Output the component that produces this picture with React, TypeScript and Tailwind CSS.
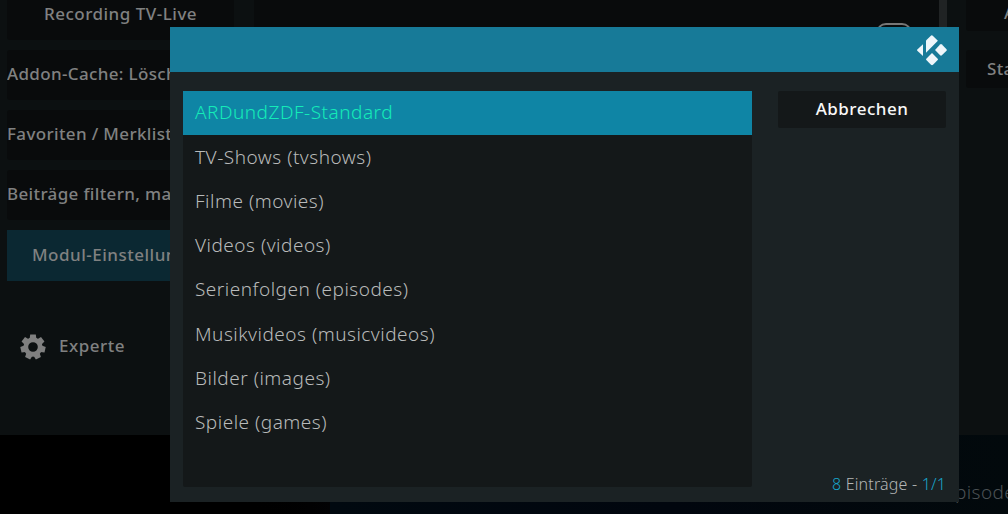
import React from "react";

const entries: string[] = [
  "ARDundZDF-Standard",
  "TV-Shows (tvshows)",
  "Filme (movies)",
  "Videos (videos)",
  "Serienfolgen (episodes)",
  "Musikvideos (musicvideos)",
  "Bilder (images)",
  "Spiele (games)",
];

function KodiLogo() {
  return (
    <svg width="30" height="32" viewBox="0 0 30 32" fill="#eef6fa" className="mr-[12px]">
      <path d="M13.6 1.9Q14.8.7 16 1.9L20.9 6.8 9 18.7V7.1Q9 6.5 9.5 6Z" />
      <path d="M6 10.2V22L.3 16.7Q-.2 16 .3 15.4Z" />
      <path d="M23.1 10.5Q24 9.6 24.9 10.5L29.5 15.2Q30.1 16 29.5 16.8L24.9 21.3Q24 22.1 23.1 21.3L18 16Z" />
      <path d="M15 19.1 20.7 24.7Q21.3 25.4 20.7 26.1L16 30.8Q15 31.6 14 30.8L9.3 26.1Q8.7 25.4 9.3 24.7Z" />
    </svg>
  );
}

function GearIcon() {
  const teeth = [0, 51.43, 102.86, 154.29, 205.71, 257.14, 308.57];
  return (
    <svg width="26" height="26" viewBox="-13.5 -13.5 27 27" fill="none">
      <circle r="7.5" stroke="#808080" strokeWidth="5" />
      {teeth.map((angle) => (
        <path key={angle} d="M-3.5-8.5-2.9-12.9H2.9L3.5-8.5Z" fill="#808080" transform={`rotate(${angle})`} />
      ))}
    </svg>
  );
}

function MenuButton({ label }: { label: string }) {
  return (
    <div className="flex h-[50px] w-[163px] shrink-0 items-center overflow-hidden rounded-l-[3px] bg-[#090b0c] pb-[2px] tracking-[0.35px]">
      <span>{label}</span>
    </div>
  );
}

function Backdrop() {
  return (
    <div className="flex h-full flex-col">
      <div className="flex h-[435px] shrink-0 bg-[#0c1011]">
        <aside className="flex w-[254px] shrink-0 flex-col gap-[10px] pl-[7px] pr-5 text-[17px] font-medium tracking-[0.5px] text-[#808181]">
          <div className="flex h-10 shrink-0 items-start justify-center rounded-b-[3px] bg-[#090b0c] leading-[27px]">Recording TV-Live</div>
          <MenuButton label="Addon-Cache: Lösch" />
          <MenuButton label="Favoriten / Merklist" />
          <MenuButton label="Beiträge filtern, ma" />
          <div className="flex h-[51px] w-[163px] shrink-0 items-center overflow-hidden bg-[#0b2832] pb-[2px] pl-[25px]">Modul-Einstellun</div>
          <div className="ml-[13px] mt-[42px] flex items-center gap-[13px]">
            <GearIcon />
            <span className="pb-[2px]">Experte</span>
          </div>
        </aside>
        <main className="flex w-[685px] shrink-0 justify-end bg-[#090b0c] pr-[27px] pt-[23px]">
          <div className="h-5 w-[36px] rounded-full border-2 border-[#777777]" />
        </main>
        <div className="w-2 shrink-0 bg-[#202324]" />
        <aside className="flex grow flex-col gap-[19px] overflow-hidden pl-[19px] text-[17px] font-medium tracking-[0.3px] text-[#808181]">
          <div className="h-[31px] shrink-0 rounded-bl-[3px] bg-[#090b0c] pl-[38px] leading-[25px]">A</div>
          <div className="h-[38px] shrink-0 rounded-l-[3px] bg-[#090b0c] pl-[21px] leading-[38px]">Sta</div>
        </aside>
      </div>
      <footer className="flex grow bg-black">
        <div className="w-[330px] shrink-0 bg-linear-to-r from-black from-70% to-[#020204]" />
        <div className="flex grow overflow-hidden bg-linear-to-r from-[#010910] via-[#01060e] to-[#02090c] pl-[625px] pt-[43px] text-[19px] font-light tracking-[0.4px] text-[#4b5154]">
          <span>pisode</span>
        </div>
      </footer>
    </div>
  );
}

function SelectDialog() {
  return (
    <section role="dialog" className="absolute left-[170px] top-[27px] flex h-[475px] w-[789px] flex-col bg-[#1b2224]">
      <header className="flex h-[45px] shrink-0 items-center justify-end bg-[#177a98]">
        <KodiLogo />
      </header>
      <div className="flex grow gap-[26px] pb-[15px] pl-[13px] pr-[13px] pt-[19px]">
        <ul className="w-[569px] rounded-b-[2px] bg-[#141819] text-[19px] font-light tracking-[0.5px] text-[#b8baba]">
          {entries.map((entry, index) => (
            <li
              key={entry}
              className={
                index === 0
                  ? "flex h-[44.3px] items-center bg-[#0f85a5] pb-[1.4px] pl-3 text-[#14ecb8]"
                  : "flex h-[44.3px] items-center pb-[1.4px] pl-3"
              }
            >
              {entry}
            </li>
          ))}
        </ul>
        <div className="flex grow flex-col justify-between">
          <button className="h-[37px] rounded-[2px] bg-[#141819] pb-[2px] text-[17px] font-medium tracking-[0.5px] text-[#f8f8f8]">Abbrechen</button>
          <p className="-mb-[9px] text-right text-[16px] font-light leading-6 tracking-[0.18px] text-[#b4b6b6]">
            <span className="text-[#17a4ca]">8</span> Einträge - <span className="text-[#17a4ca]">1/1</span>
          </p>
        </div>
      </div>
    </section>
  );
}

export default function App() {
  return (
    <div className="relative h-[514px] w-[1008px] overflow-hidden whitespace-nowrap bg-black font-['Noto_Sans',sans-serif]">
      <Backdrop />
      <SelectDialog />
    </div>
  );
}
